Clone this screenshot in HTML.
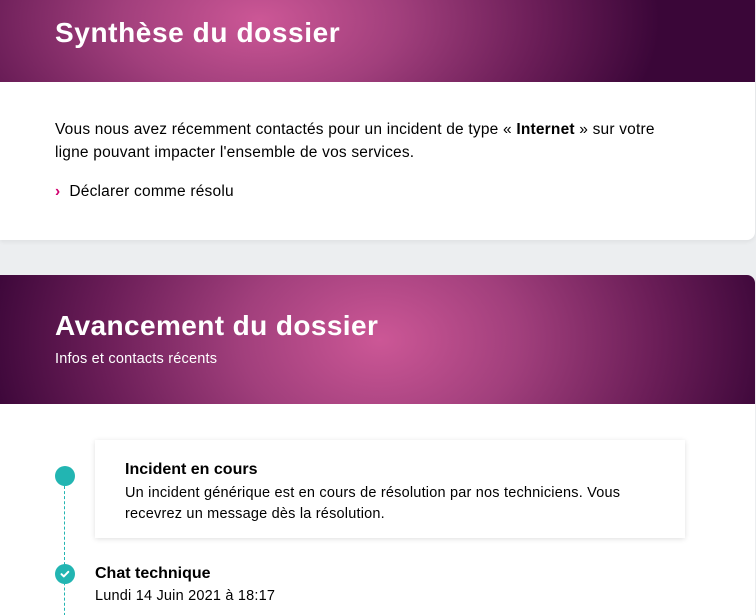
<!DOCTYPE html>
<html><head><meta charset="utf-8"><style>
*{margin:0;padding:0;box-sizing:border-box}
body{width:756px;height:608px;overflow:hidden;background:#eceef0;font-family:"Liberation Sans",sans-serif;color:#000;position:relative}
.c1{position:absolute;left:0;top:0;width:755px;height:240px;background:#fff;border-radius:0 0 8px 0;overflow:hidden;box-shadow:0 2px 4px rgba(0,0,0,.06)}
.h1{height:82px;background:radial-gradient(ellipse 400px 220px at 260px 20px,#cc5796 0%,#a13f7c 35%,#6a1d57 70%,#3a0638 100%);position:relative}
.h1 h1{position:absolute;left:55px;top:17px;color:#fff;font-size:28px;font-weight:bold;letter-spacing:0.6px}
.p{position:absolute;left:55px;top:118px;font-size:15.5px;line-height:23px;width:640px;letter-spacing:0.2px}
.lnk{position:absolute;left:55px;top:183px;font-size:15.5px;letter-spacing:0.2px}
.lnk span{color:#d0006f;font-weight:bold;margin-right:9px}
.c2{position:absolute;left:0;top:275px;width:755px;height:340px;background:#fff;border-radius:0 8px 0 0;overflow:hidden}
.h2{height:129px;background:radial-gradient(ellipse 400px 280px at 380px 65px,#cc5796 0%,#a13f7c 35%,#6a1d57 70%,#3a0638 100%);position:relative;color:#fff}
.h2 h2{position:absolute;left:55px;top:35px;font-size:28px;font-weight:bold;letter-spacing:0.4px}
.h2 p{position:absolute;left:55px;top:76px;font-size:14.5px;letter-spacing:0.2px}
.box{position:absolute;left:95px;top:165px;width:590px;height:98px;background:#fff;box-shadow:0 1px 5px rgba(0,0,0,.13)}
.box b{position:absolute;left:30px;top:21px;font-size:16px}
.box p{position:absolute;left:30px;top:43px;font-size:14.5px;line-height:21px;width:540px;letter-spacing:0.2px}
.dot{position:absolute;left:55px;width:20px;height:20px;border-radius:50%;background:#22b5b2}
.line{position:absolute;left:64px;top:211px;height:140px;border-left:1.5px dashed #22b5b2}
.t2{position:absolute;left:95px;top:290px;font-size:16px;font-weight:bold}
.d2{position:absolute;left:95px;top:313px;font-size:14.5px;letter-spacing:0.2px}
</style></head><body>
<div class="c1"><div class="h1"><h1>Synthèse du dossier</h1></div>
<div class="p">Vous nous avez récemment contactés pour un incident de type « <b>Internet</b> » sur votre<br>ligne pouvant impacter l'ensemble de vos services.</div>
<div class="lnk"><span>›</span>Déclarer comme résolu</div></div>
<div class="c2"><div class="h2"><h2>Avancement du dossier</h2><p>Infos et contacts récents</p></div>
<div class="line"></div>
<div class="dot" style="top:191px"></div>
<div class="box"><b>Incident en cours</b><p>Un incident générique est en cours de résolution par nos techniciens. Vous recevrez un message dès la résolution.</p></div>
<div class="dot" style="top:289px"><svg width="20" height="20" viewBox="0 0 20 20"><path d="M6.5 10.2l2.3 2.2 4.5-4.6" stroke="#fff" stroke-width="2" fill="none" stroke-linecap="round" stroke-linejoin="round"/></svg></div>
<div class="t2">Chat technique</div><div class="d2">Lundi 14 Juin 2021 à 18:17</div>
</div>
</body></html>
